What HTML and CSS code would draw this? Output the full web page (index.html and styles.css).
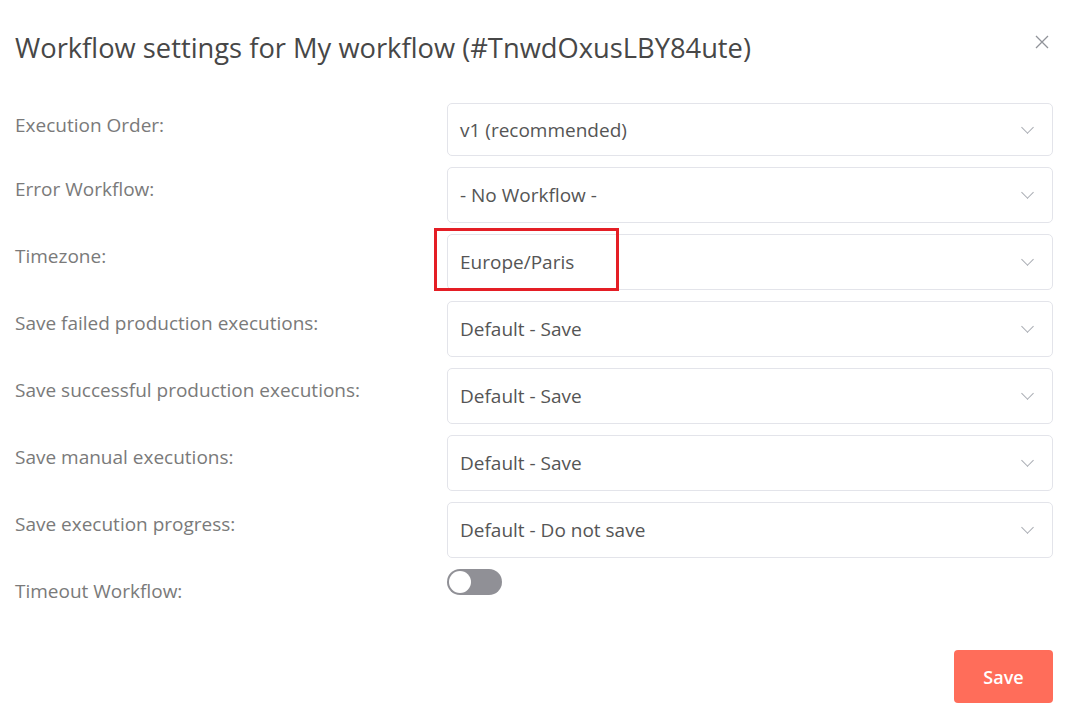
FILE: index.html
```html
<!DOCTYPE html>
<html lang="en">
<head>
  <meta charset="UTF-8" />
  <title>Workflow settings</title>
  <link rel="stylesheet" href="styles.css">
</head>
<body>
  <div class="dialog">
    <div class="header">
      <h1 class="title">Workflow settings for My workflow (#TnwdOxusLBY84ute)</h1>
      <button class="close" aria-label="Close">
        <svg width="14" height="14" viewBox="0 0 14 14"><path d="M1 1L13 13M13 1L1 13" stroke="#909399" stroke-width="1.3" fill="none"/></svg>
      </button>
    </div>

    <div class="settings">
      <div class="label">Execution Order:</div>
      <div class="select"><span>v1 (recommended)</span><i class="chevron"></i></div>

      <div class="label">Error Workflow:</div>
      <div class="select"><span>- No Workflow -</span><i class="chevron"></i></div>

      <div class="label">Timezone:</div>
      <div class="select"><span>Europe/Paris</span><i class="chevron"></i><div class="highlight"></div></div>

      <div class="label">Save failed production executions:</div>
      <div class="select"><span>Default - Save</span><i class="chevron"></i></div>

      <div class="label">Save successful production executions:</div>
      <div class="select"><span>Default - Save</span><i class="chevron"></i></div>

      <div class="label">Save manual executions:</div>
      <div class="select"><span>Default - Save</span><i class="chevron"></i></div>

      <div class="label">Save execution progress:</div>
      <div class="select"><span>Default - Do not save</span><i class="chevron"></i></div>

      <div class="label">Timeout Workflow:</div>
      <div class="toggle-cell"><div class="toggle"><div class="knob"></div></div></div>
    </div>

    <div class="footer">
      <button class="save">Save</button>
    </div>
  </div>
</body>
</html>
```

FILE: styles.css
```css
* {
  margin: 0;
  padding: 0;
  box-sizing: border-box;
}
html, body {
  width: 100%;
  height: 100%;
  background: #fff;
  font-family: 'Open Sans', 'Noto Sans', sans-serif;
  color: #555;
  overflow: hidden;
}

.dialog {
  padding: 0 27px 0 15px;
}

.header {
  display: flex;
  justify-content: space-between;
  align-items: flex-start;
  padding-top: 30px;
  height: 103px;
}
.title {
  font-size: 27.3px;
  font-weight: 400;
  color: #474747;
  line-height: 36px;
}
.close {
  background: none;
  border: none;
  margin-top: 5px;
  margin-right: 4px;
  cursor: pointer;
}

.settings {
  display: grid;
  grid-template-columns: 432px 606px;
  grid-template-rows: 53px;
  grid-auto-rows: 56px;
  row-gap: 11px;
}

.label {
  font-size: 19px;
  color: #7a7a7a;
  padding-top: 9px;
  line-height: 26px;
}

.select {
  position: relative;
  display: flex;
  align-items: center;
  justify-content: space-between;
  border: 1px solid #e3e4ea;
  border-radius: 5px;
  padding: 0 20px 0 12px;
  font-size: 19px;
  color: #555;
}
.chevron {
  width: 9px;
  height: 9px;
  border-right: 1.3px solid #a8abb2;
  border-bottom: 1.3px solid #a8abb2;
  transform: rotate(45deg);
  margin-top: -5px;
}

.highlight {
  position: absolute;
  left: -14px;
  top: -7px;
  width: 185px;
  height: 63px;
  border: 3.5px solid #e41e25;
}

.toggle {
  width: 55px;
  height: 26px;
  border-radius: 13px;
  background: #909096;
  padding: 2px;
}
.knob {
  width: 22px;
  height: 22px;
  border-radius: 50%;
  background: #fff;
}

.footer {
  display: flex;
  justify-content: flex-end;
  padding-top: 25px;
}
.save {
  width: 99px;
  height: 53px;
  background: #ff6d5a;
  color: #fff;
  border: none;
  border-radius: 4px;
  font-family: 'Open Sans', sans-serif;
  font-size: 18px;
  font-weight: 600;
  cursor: pointer;
}
```
